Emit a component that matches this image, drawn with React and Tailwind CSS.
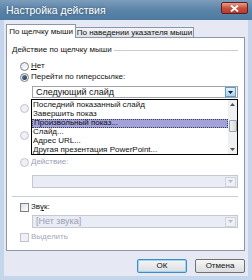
import React from "react";

const FONT = { fontFamily: '"Liberation Sans", Arial, sans-serif' };

function Radio({ checked, disabled }) {
  return (
    <span
      className={`relative flex h-[9px] w-[9px] shrink-0 items-center justify-center rounded-full border ${
        disabled ? "border-[#c2c4cc] bg-[#eef0f4]" : "border-[#7b7f88] bg-gradient-to-br from-[#e4e6ea] to-[#ffffff]"
      }`}
    >
      {checked && <span className="h-[5px] w-[5px] rounded-full bg-gradient-to-br from-[#6a86a0] to-[#1d3448]" />}
    </span>
  );
}

function Check({ disabled }) {
  return (
    <span
      className={`h-[9px] w-[9px] shrink-0 border ${
        disabled ? "border-[#c2c4cc] bg-[#eef0f4]" : "border-[#7b7f88] bg-gradient-to-br from-[#dcdee2] to-[#ffffff]"
      }`}
    />
  );
}

function Arrow({ disabled }) {
  return (
    <svg width="5" height="3" viewBox="0 0 5 3">
      <path d="M0 0h5L2.5 3z" fill={disabled ? "#b8bcc6" : "#1a1a1a"} />
    </svg>
  );
}

function Select({ text, disabled, h = "h-[13px]" }) {
  return (
    <div
      className={`ml-[25px] mr-[6px] flex ${h} items-center justify-between border pl-[3px] pr-px ${
        disabled ? "border-[#c4c8d2] bg-[#e9ecf5] text-[#9a9eb4]" : "border-[#a0a4ac] bg-white text-[#111]"
      }`}
    >
      <span className="text-[9px] leading-none">{text}</span>
      <span
        className={`flex h-[10px] w-[11px] items-center justify-center border ${
          disabled ? "border-[#d0d4dc] bg-[#eef0f5]" : "border-[#5f9ccc] bg-gradient-to-b from-[#e4f2fc] to-[#a9d2f0]"
        }`}
      >
        <Arrow disabled={disabled} />
      </span>
    </div>
  );
}

const listItems = [
  "Последний показанный слайд",
  "Завершить показ",
  "Произвольный показ...",
  "Слайд...",
  "Адрес URL...",
  "Другая презентация PowerPoint...",
];

export default function App() {
  return (
    <div className="flex h-[280px] w-[252px] flex-col overflow-hidden bg-[#c3d6ec]" style={FONT}>
      <div className="flex h-[20px] shrink-0 items-start justify-between bg-gradient-to-b from-[#7d9dbb] via-[#5a84a8] to-[#4f7aa0] pl-[6px] pr-[4px]">
        <span className="mt-[5px] text-[10.5px] leading-none text-white [text-shadow:0_0_3px_rgba(0,0,0,0.4)]">
          Настройка действия
        </span>
        <span className="mt-[2px] flex h-[12px] w-[27px] items-center justify-center rounded-[2px] border border-[#5a2020] bg-gradient-to-b from-[#e6a090] via-[#c8503c] to-[#b83a2a]">
          <svg width="9" height="7" viewBox="0 0 9 7">
            <path d="M1 0.5l7 6M8 0.5l-7 6" stroke="white" strokeWidth="1.8" />
          </svg>
        </span>
      </div>

      <div className="mx-[4px] mb-[4px] flex flex-1 flex-col bg-[#e6e9f4] pl-[2px] pr-[3px] pt-[4px]">
        <div className="flex h-[13px] items-end">
          <div className="relative z-10 mb-[-1px] flex h-[14px] w-[70px] items-center justify-center border border-b-0 border-[#8a97a8] bg-white text-[8px] leading-none text-[#111]">
            По щелчку мыши
          </div>
          <div className="flex h-[10px] w-[118px] items-center justify-center border border-b-0 border-l-0 border-[#8a97a8] bg-gradient-to-b from-[#f4f4f6] to-[#dfe2e8] text-[8px] leading-none text-[#111]">
            По наведении указателя мыши
          </div>
        </div>

        <div className="relative flex h-[214px] flex-col border border-[#8a97a8] bg-white text-[8px] leading-none text-[#111]">
          <div className="ml-[5px] mr-[6px] mt-[7px] flex h-[10px] items-center gap-[2px]">
            <span>Действие по щелчку мыши</span>
            <span className="h-px flex-1 bg-[#c8ccd6]" />
          </div>

          <div className="ml-[13px] mt-[6px] flex h-[10px] items-center gap-[2px]">
            <Radio />
            <span>
              <span className="underline">Н</span>ет
            </span>
          </div>

          <div className="ml-[13px] mt-[1px] flex h-[10px] items-center gap-[2px]">
            <Radio checked />
            <span>Перейти по гиперссылке:</span>
          </div>

          <div className="mt-[4px]">
            <Select text="Следующий слайд" h="h-[12px]" />
          </div>

          {/* rows hidden behind the open list */}
          <div className="ml-[13px] mt-[5px] flex h-[10px] items-center">
            <Radio disabled />
          </div>
          <div className="ml-[25px] mr-[6px] mt-[3px] h-[11px] border border-[#c4c8d2]" />

          <div className="ml-[13px] mt-[3px] flex h-[10px] items-center">
            <Radio disabled />
          </div>
          <div className="ml-[25px] mr-[6px] mt-[3px] h-[12px] border border-[#c4c8d2]" />

          <div className="ml-[13px] mt-[2px] flex h-[10px] items-center gap-[2px] text-[#9a9eb4]">
            <Radio disabled />
            <span>Действие:</span>
          </div>

          <div className="mt-[8px]">
            <Select text="" disabled />
          </div>

          <div className="ml-[5px] mr-[6px] mt-[8px] h-px bg-[#c8ccd6]" />

          <div className="ml-[13px] mt-[5px] flex h-[10px] items-center gap-[2px]">
            <Check />
            <span>
              Зв<span className="underline">у</span>к:
            </span>
          </div>

          <div className="mt-[3px]">
            <Select text="[Нет звука]" disabled />
          </div>

          <div className="ml-[13px] mt-[4px] flex h-[10px] items-center gap-[2px] text-[#a4a8bc]">
            <Check disabled />
            <span>Выделить</span>
          </div>

          <div className="absolute left-[24px] top-[61px] flex h-[56px] w-[207px] border border-black bg-white">
            <div className="flex flex-1 flex-col pt-px">
              {listItems.map((item) => (
                <div
                  key={item}
                  className={`flex h-[9px] items-center whitespace-nowrap pl-px text-[8px] leading-none text-[#111] ${
                    item === "Произвольный показ..." ? "border border-dotted border-[#3a3a5a] bg-[#a2a2d8]" : ""
                  }`}
                >
                  {item}
                </div>
              ))}
            </div>
            <div className="flex w-[9px] flex-col items-center justify-between bg-[#eef0f2] py-[3px]">
              <svg width="5" height="3" viewBox="0 0 5 3">
                <path d="M0 3h5L2.5 0z" fill="#505050" />
              </svg>
              <span className="mt-[14px] h-[12px] w-[8px] rounded-[1px] border border-[#9aa0a8] bg-gradient-to-r from-[#f4f4f4] to-[#d6d8dc]" />
              <span className="flex-1" />
              <svg width="5" height="3" viewBox="0 0 5 3">
                <path d="M0 0h5L2.5 3z" fill="#505050" />
              </svg>
            </div>
          </div>
        </div>

        <div className="mt-[8px] flex h-[14px] justify-end gap-[8px]">
          <button className="flex w-[50px] items-center justify-center rounded-[2px] border border-[#3c8cc8] bg-gradient-to-b from-[#f6f6f6] to-[#dcdde0] text-[8px] leading-none text-[#111] [box-shadow:inset_0_0_0_1px_#9fd6f4]">
            ОК
          </button>
          <button className="flex w-[50px] items-center justify-center rounded-[2px] border border-[#707070] bg-gradient-to-b from-[#f6f6f6] to-[#dcdde0] text-[8px] leading-none text-[#111]">
            Отмена
          </button>
        </div>
      </div>
    </div>
  );
}
